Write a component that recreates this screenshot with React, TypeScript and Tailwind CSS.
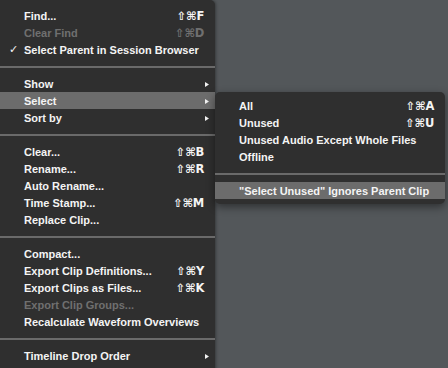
import React from "react";

type Item =
  | { kind: "sep" }
  | {
      kind: "item";
      label: string;
      shortcut?: string;
      disabled?: boolean;
      checked?: boolean;
      submenu?: boolean;
      active?: boolean;
    };

const mainItems: Item[] = [
  { kind: "item", label: "Find...", shortcut: "⇧⌘F" },
  { kind: "item", label: "Clear Find", shortcut: "⇧⌘D", disabled: true },
  { kind: "item", label: "Select Parent in Session Browser", checked: true },
  { kind: "sep" },
  { kind: "item", label: "Show", submenu: true },
  { kind: "item", label: "Select", submenu: true, active: true },
  { kind: "item", label: "Sort by", submenu: true },
  { kind: "sep" },
  { kind: "item", label: "Clear...", shortcut: "⇧⌘B" },
  { kind: "item", label: "Rename...", shortcut: "⇧⌘R" },
  { kind: "item", label: "Auto Rename..." },
  { kind: "item", label: "Time Stamp...", shortcut: "⇧⌘M" },
  { kind: "item", label: "Replace Clip..." },
  { kind: "sep" },
  { kind: "item", label: "Compact..." },
  { kind: "item", label: "Export Clip Definitions...", shortcut: "⇧⌘Y" },
  { kind: "item", label: "Export Clips as Files...", shortcut: "⇧⌘K" },
  { kind: "item", label: "Export Clip Groups...", disabled: true },
  { kind: "item", label: "Recalculate Waveform Overviews" },
  { kind: "sep" },
  { kind: "item", label: "Timeline Drop Order", submenu: true },
];

const subItems: Item[] = [
  { kind: "item", label: "All", shortcut: "⇧⌘A" },
  { kind: "item", label: "Unused", shortcut: "⇧⌘U" },
  { kind: "item", label: "Unused Audio Except Whole Files" },
  { kind: "item", label: "Offline" },
  { kind: "sep" },
  { kind: "item", label: "\"Select Unused\" Ignores Parent Clip", active: true },
];

function Arrow() {
  return (
    <svg width="4" height="5" viewBox="0 0 4 5" className="block">
      <path d="M0 0 L4 2.5 L0 5 Z" fill="#f2f2f2" />
    </svg>
  );
}

function Rows({ items }: { items: Item[] }) {
  return (
    <>
      {items.map((it, i) => {
        if (it.kind === "sep") {
          return (
            <div key={i} className="h-[17px] flex items-center">
              <div className="h-[2px] w-full bg-[#6a6a6a]" />
            </div>
          );
        }
        return (
          <div
            key={i}
            className={`relative h-[17px] box-border pt-[2px] flex items-center pl-[24px] pr-[11px] ${
              it.active ? "bg-[#6c6c6c]" : ""
            } ${it.disabled ? "text-[#6f6f6f]" : "text-[#f4f4f4]"}`}
          >
            {it.checked && (
              <span className="absolute left-[9px] top-[1px] h-[17px] flex items-center text-[11px] font-['DejaVu_Sans',sans-serif]">
                ✓
              </span>
            )}
            <span className="flex-1 whitespace-nowrap">{it.label}</span>
            {it.shortcut && (
              <span className="whitespace-nowrap font-['DejaVu_Sans',sans-serif] text-[11.5px] tracking-[-0.3px]">
                {it.shortcut}
              </span>
            )}
            {it.submenu && (
              <span className="mr-[-5px]">
                <Arrow />
              </span>
            )}
          </div>
        );
      })}
    </>
  );
}

export default function App() {
  return (
    <div className="relative h-[368px] w-[448px] overflow-hidden bg-[#53575a] font-['Liberation_Sans',Arial,sans-serif] text-[11px] font-bold">
      <div className="w-[215px] h-[380px] bg-[#2f2f2f] rounded-tr-[5px] pt-[7px] shadow-[1px_0_3px_rgba(0,0,0,0.35)]">
        <Rows items={mainItems} />
      </div>
      <div className="absolute left-[215px] top-[92px] w-[230px] bg-[#2f2f2f] rounded-[5px] py-[5px] shadow-[0_3px_8px_rgba(0,0,0,0.45)]">
        <Rows items={subItems} />
      </div>
    </div>
  );
}
